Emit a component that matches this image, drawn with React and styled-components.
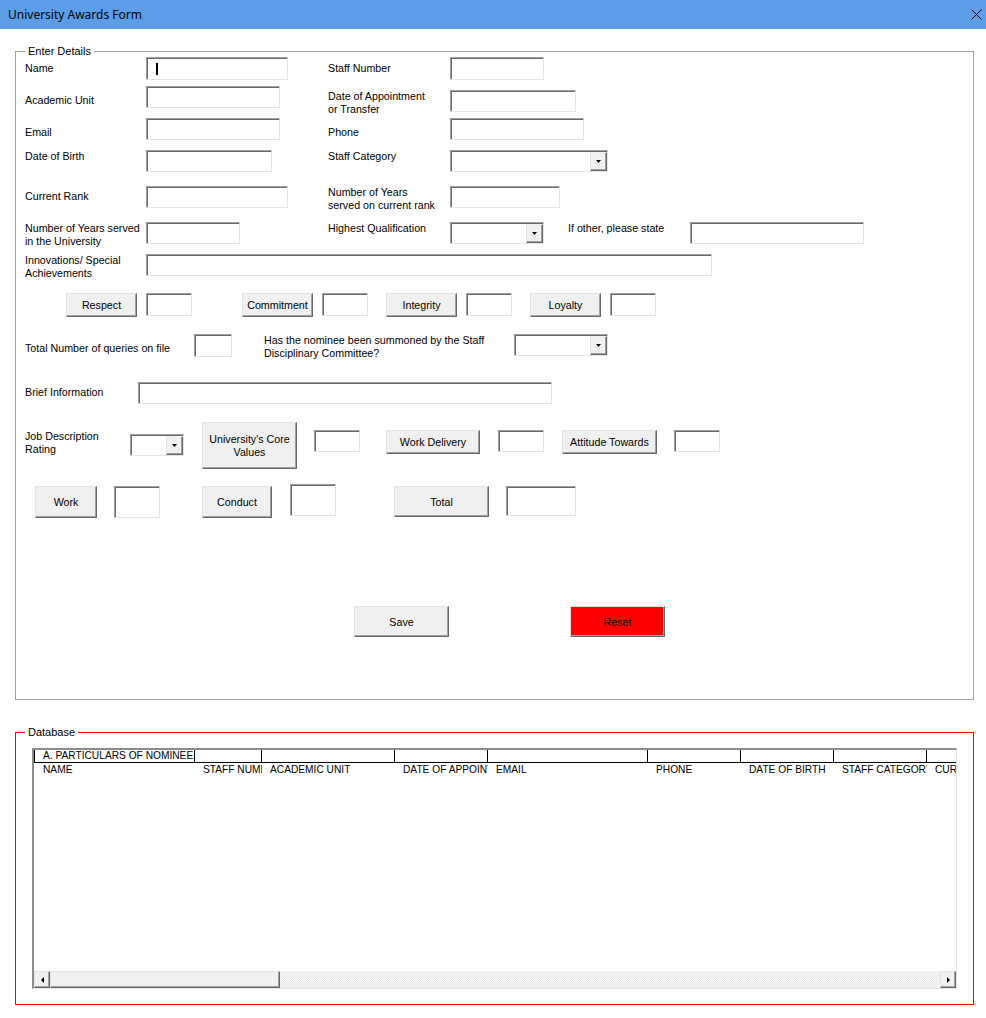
import React from "react";
import styled, { createGlobalStyle } from "styled-components";

const GlobalStyle = createGlobalStyle`
  html, body { margin: 0; padding: 0; background: #fff; }
  body { font-family: "Liberation Sans", Arial, sans-serif; font-size: 10.7px; color: #000; }
  * { box-sizing: border-box; }
`;

const Window = styled.div`
  width: 986px;
  height: 1018px;
  background: #fff;
  display: flex;
  flex-direction: column;
  overflow: hidden;
`;

const TitleBar = styled.div`
  flex: none;
  height: 29px;
  background: #5b9de7;
  display: flex;
  align-items: center;
  justify-content: space-between;
  padding: 0 4px 0 8px;
  font-family: "Noto Sans", "Open Sans", sans-serif;
  font-size: 12px;
  color: #000;
`;

const Body = styled.div`
  display: flex;
  flex-direction: column;
  padding: 16px 0 0 15px;
`;

const Frame = styled.fieldset`
  margin: 0 0 ${(p) => p.$mb || 0}px 0;
  min-width: 0;
  width: 959px;
  border: 1px solid ${(p) => p.$color};
  padding: ${(p) => p.$pt || 0}px 0 ${(p) => p.$pb}px 9px;
  display: flex;
  flex-direction: column;
`;

const Legend = styled.legend`
  padding: 0 3px;
  margin: 0;
  font-size: 11px;
  line-height: 13px;
`;

const FormRows = styled.div`
  display: flex;
  flex-direction: column;
  margin-top: -1px;
`;

const Row = styled.div`
  flex: none;
  height: ${(p) => p.$h}px;
  display: flex;
  align-items: flex-start;
`;

const Label = styled.div`
  flex: none;
  width: ${(p) => p.$w}px;
  margin-left: ${(p) => p.$ml || 0}px;
  margin-top: ${(p) => (p.$mt || 0) + 1}px;
  line-height: 13px;
  white-space: nowrap;
`;

const TextBox = styled.div`
  flex: none;
  width: ${(p) => p.$w}px;
  height: ${(p) => p.$h || 22}px;
  margin-left: ${(p) => p.$ml || 0}px;
  margin-top: ${(p) => p.$mt || 0}px;
  background: #fff;
  border: 1px solid;
  border-color: #a0a0a0 #e3e3e3 #e3e3e3 #a0a0a0;
  box-shadow: inset 1px 1px 0 #696969;
  display: flex;
  align-items: center;
`;

const Caret = styled.span`
  display: block;
  width: 2px;
  height: 12px;
  margin-left: 9px;
  background: #000;
`;

const Combo = styled(TextBox)`
  justify-content: flex-end;
  align-items: stretch;
  padding: 1px 0 0 1px;
`;

const DropBtn = styled.div`
  width: 17px;
  background: #f0f0f0;
  border: 1px solid;
  border-color: #f0f0f0 #696969 #696969 #e3e3e3;
  box-shadow: inset -1px -1px 0 #a0a0a0;
  display: flex;
  align-items: center;
  justify-content: center;
`;

const Button = styled.button`
  flex: none;
  width: ${(p) => p.$w}px;
  height: ${(p) => p.$h}px;
  margin: ${(p) => p.$mt || 0}px 0 0 ${(p) => p.$ml || 0}px;
  padding: 1px 0 0 0;
  background: ${(p) => p.$bg || "#f0f0f0"};
  border: 1px solid;
  border-color: #e3e3e3 #696969 #696969 #e3e3e3;
  box-shadow: inset -1px -1px 0 #a0a0a0;
  font-family: "Liberation Sans", Arial, sans-serif;
  font-size: 10.7px;
  line-height: 13px;
  color: #000;
  text-align: center;
  display: flex;
  align-items: center;
  justify-content: center;
`;

const ListBox = styled.div`
  width: 925px;
  height: 241px;
  margin-left: 7px;
  border-style: solid;
  border-width: 2px 1px 1px 2px;
  border-color: #8c8c8c #e3e3e3 #e3e3e3 #8c8c8c;
  display: flex;
  flex-direction: column;
  background: #fff;
`;

const Viewport = styled.div`
  flex: 1;
  overflow: hidden;
  font-size: 10.2px;
`;

const HeadRow = styled.div`
  display: grid;
  grid-template-columns: 161px 67px 133px 93px 160px 93px 93px 93px 93px;
  height: 13px;
  border-bottom: ${(p) => (p.$top ? "1px solid #000" : "none")};
  width: 1000px;
`;

const HeadCell = styled.div`
  overflow: hidden;
  white-space: nowrap;
  line-height: ${(p) => (p.$top ? 12 : 14)}px;
  border-right: ${(p) => (p.$top ? "1px solid #000" : "none")};
  border-left: ${(p) => (p.$top && p.$first ? "1px solid #000" : "none")};
  padding-left: ${(p) => (p.$top && p.$first ? 8 : p.$first ? 9 : 8)}px;
`;

const ScrollBar = styled.div`
  flex: none;
  height: 17px;
  display: flex;
`;

const ScrollBtn = styled.div`
  flex: none;
  width: ${(p) => p.$w}px;
  background: #f0f0f0;
  border: 1px solid;
  border-color: #e3e3e3 #696969 #696969 #e3e3e3;
  box-shadow: inset -1px -1px 0 #a0a0a0;
  display: flex;
  align-items: center;
  justify-content: center;
`;

const Track = styled.div`
  flex: 1;
  background: repeating-conic-gradient(#e6e6e6 0 25%, #fafafa 0 50%) 0 0 / 2px 2px;
`;

const Arrow = ({ dir }) => {
  const pts = {
    down: "0,0 5,0 2.5,3",
    left: "3,0 3,6 0,3",
    right: "0,0 0,6 3,3",
  }[dir];
  const w = dir === "down" ? 5 : 3;
  const h = dir === "down" ? 3 : 6;
  return (
    <svg width={w} height={h} viewBox={`0 0 ${w} ${h}`}>
      <polygon points={pts} fill="#000" />
    </svg>
  );
};

const CloseIcon = () => (
  <svg width="11" height="11" viewBox="0 0 11 11">
    <path d="M0.5 0.5 L10.5 10.5 M10.5 0.5 L0.5 10.5" stroke="#000" strokeWidth="1" fill="none" />
  </svg>
);

const DropCombo = (props) => (
  <Combo {...props}>
    <DropBtn>
      <Arrow dir="down" />
    </DropBtn>
  </Combo>
);

const topHeaders = ["A. PARTICULARS OF NOMINEE", "", "", "", "", "", "", "", ""];
const subHeaders = [
  "NAME",
  "STAFF NUMBER",
  "ACADEMIC UNIT",
  "DATE OF APPOINTMENT",
  "EMAIL",
  "PHONE",
  "DATE OF BIRTH",
  "STAFF CATEGORY",
  "CURRENT RANK",
];

export default function App() {
  return (
    <Window>
      <GlobalStyle />
      <TitleBar>
        <span>University Awards Form</span>
        <CloseIcon />
      </TitleBar>
      <Body>
        <Frame $color="#a0a0a0" $pb={62} $mb={26}>
          <Legend>Enter Details</Legend>
          <FormRows>
            <Row $h={29}>
              <Label $w={121} $mt={4}>Name</Label>
              <TextBox $w={142} $h={23}>
                <Caret />
              </TextBox>
              <Label $ml={40} $w={122} $mt={4}>Staff Number</Label>
              <TextBox $w={94} $h={23} />
            </Row>
            <Row $h={32}>
              <Label $w={121} $mt={7}>Academic Unit</Label>
              <TextBox $w={134} $h={22} />
              <Label $ml={48} $w={122} $mt={3}>
                Date of Appointment
                <br />
                or Transfer
              </Label>
              <TextBox $w={126} $h={22} $mt={4} />
            </Row>
            <Row $h={32}>
              <Label $w={121} $mt={7}>Email</Label>
              <TextBox $w={134} $h={22} />
              <Label $ml={48} $w={122} $mt={7}>Phone</Label>
              <TextBox $w={134} $h={22} />
            </Row>
            <Row $h={36}>
              <Label $w={121} $mt={-1}>Date of Birth</Label>
              <TextBox $w={126} $h={22} />
              <Label $ml={56} $w={122} $mt={-1}>Staff Category</Label>
              <DropCombo $w={158} $h={22} />
            </Row>
            <Row $h={36}>
              <Label $w={121} $mt={3}>Current Rank</Label>
              <TextBox $w={142} $h={22} />
              <Label $ml={40} $w={122} $mt={-1}>
                Number of Years
                <br />
                served on current rank
              </Label>
              <TextBox $w={110} $h={22} />
            </Row>
            <Row $h={32}>
              <Label $w={121} $mt={-1}>
                Number of Years served
                <br />
                in the University
              </Label>
              <TextBox $w={94} $h={22} />
              <Label $ml={88} $w={122} $mt={-1}>Highest Qualification</Label>
              <DropCombo $w={94} $h={22} />
              <Label $ml={24} $w={122} $mt={-1}>If other, please state</Label>
              <TextBox $w={174} $h={22} />
            </Row>
            <Row $h={39}>
              <Label $w={121} $mt={-1}>
                Innovations/ Special
                <br />
                Achievements
              </Label>
              <TextBox $w={566} $h={22} />
            </Row>
            <Row $h={41}>
              <Button $ml={41} $w={71} $h={24}>Respect</Button>
              <TextBox $ml={9} $w={46} $h={23} />
              <Button $ml={50} $w={71} $h={24}>Commitment</Button>
              <TextBox $ml={9} $w={46} $h={23} />
              <Button $ml={18} $w={71} $h={24}>Integrity</Button>
              <TextBox $ml={9} $w={46} $h={23} />
              <Button $ml={18} $w={71} $h={24}>Loyalty</Button>
              <TextBox $ml={9} $w={46} $h={23} />
            </Row>
            <Row $h={48}>
              <Label $w={169} $mt={7}>Total Number of queries on file</Label>
              <TextBox $w={38} $h={23} />
              <Label $ml={32} $w={250} $mt={-1}>
                Has the nominee been summoned by the Staff
                <br />
                Disciplinary Committee?
              </Label>
              <DropCombo $w={94} $h={22} />
            </Row>
            <Row $h={40}>
              <Label $w={113} $mt={3}>Brief Information</Label>
              <TextBox $w={414} $h={22} />
            </Row>
            <Row $h={62}>
              <Label $w={105} $mt={7}>
                Job Description
                <br />
                Rating
              </Label>
              <DropCombo $w={54} $h={22} $mt={12} />
              <Button $ml={18} $w={95} $h={47}>
                University's Core
                <br />
                Values
              </Button>
              <TextBox $ml={17} $w={46} $h={22} $mt={8} />
              <Button $ml={26} $w={94} $h={24} $mt={8}>Work Delivery</Button>
              <TextBox $ml={18} $w={46} $h={22} $mt={8} />
              <Button $ml={18} $w={95} $h={24} $mt={8}>Attitude Towards</Button>
              <TextBox $ml={17} $w={46} $h={22} $mt={8} />
            </Row>
            <Row $h={122}>
              <Button $ml={10} $w={62} $h={32} $mt={2}>Work</Button>
              <TextBox $ml={17} $w={46} $h={32} $mt={2} />
              <Button $ml={42} $w={70} $h={32} $mt={2}>Conduct</Button>
              <TextBox $ml={18} $w={46} $h={32} />
              <Button $ml={58} $w={95} $h={31} $mt={2}>Total</Button>
              <TextBox $ml={17} $w={70} $h={30} $mt={2} />
            </Row>
            <Row $h={31}>
              <Button $ml={329} $w={95} $h={31}>Save</Button>
              <Button $ml={121} $w={95} $h={31} $bg="#ff0000">Reset</Button>
            </Row>
          </FormRows>
        </Frame>
        <Frame $color="#ff0000" $pt={9} $pb={15}>
          <Legend>Database</Legend>
          <ListBox>
            <Viewport>
              <HeadRow $top>
                {topHeaders.map((t, i) => (
                  <HeadCell key={i} $top $first={i === 0}>
                    {t}
                  </HeadCell>
                ))}
              </HeadRow>
              <HeadRow>
                {subHeaders.map((t, i) => (
                  <HeadCell key={i} $first={i === 0}>
                    {t}
                  </HeadCell>
                ))}
              </HeadRow>
            </Viewport>
            <ScrollBar>
              <ScrollBtn $w={16}>
                <Arrow dir="left" />
              </ScrollBtn>
              <ScrollBtn $w={230} />
              <Track />
              <ScrollBtn $w={16}>
                <Arrow dir="right" />
              </ScrollBtn>
            </ScrollBar>
          </ListBox>
        </Frame>
      </Body>
    </Window>
  );
}
